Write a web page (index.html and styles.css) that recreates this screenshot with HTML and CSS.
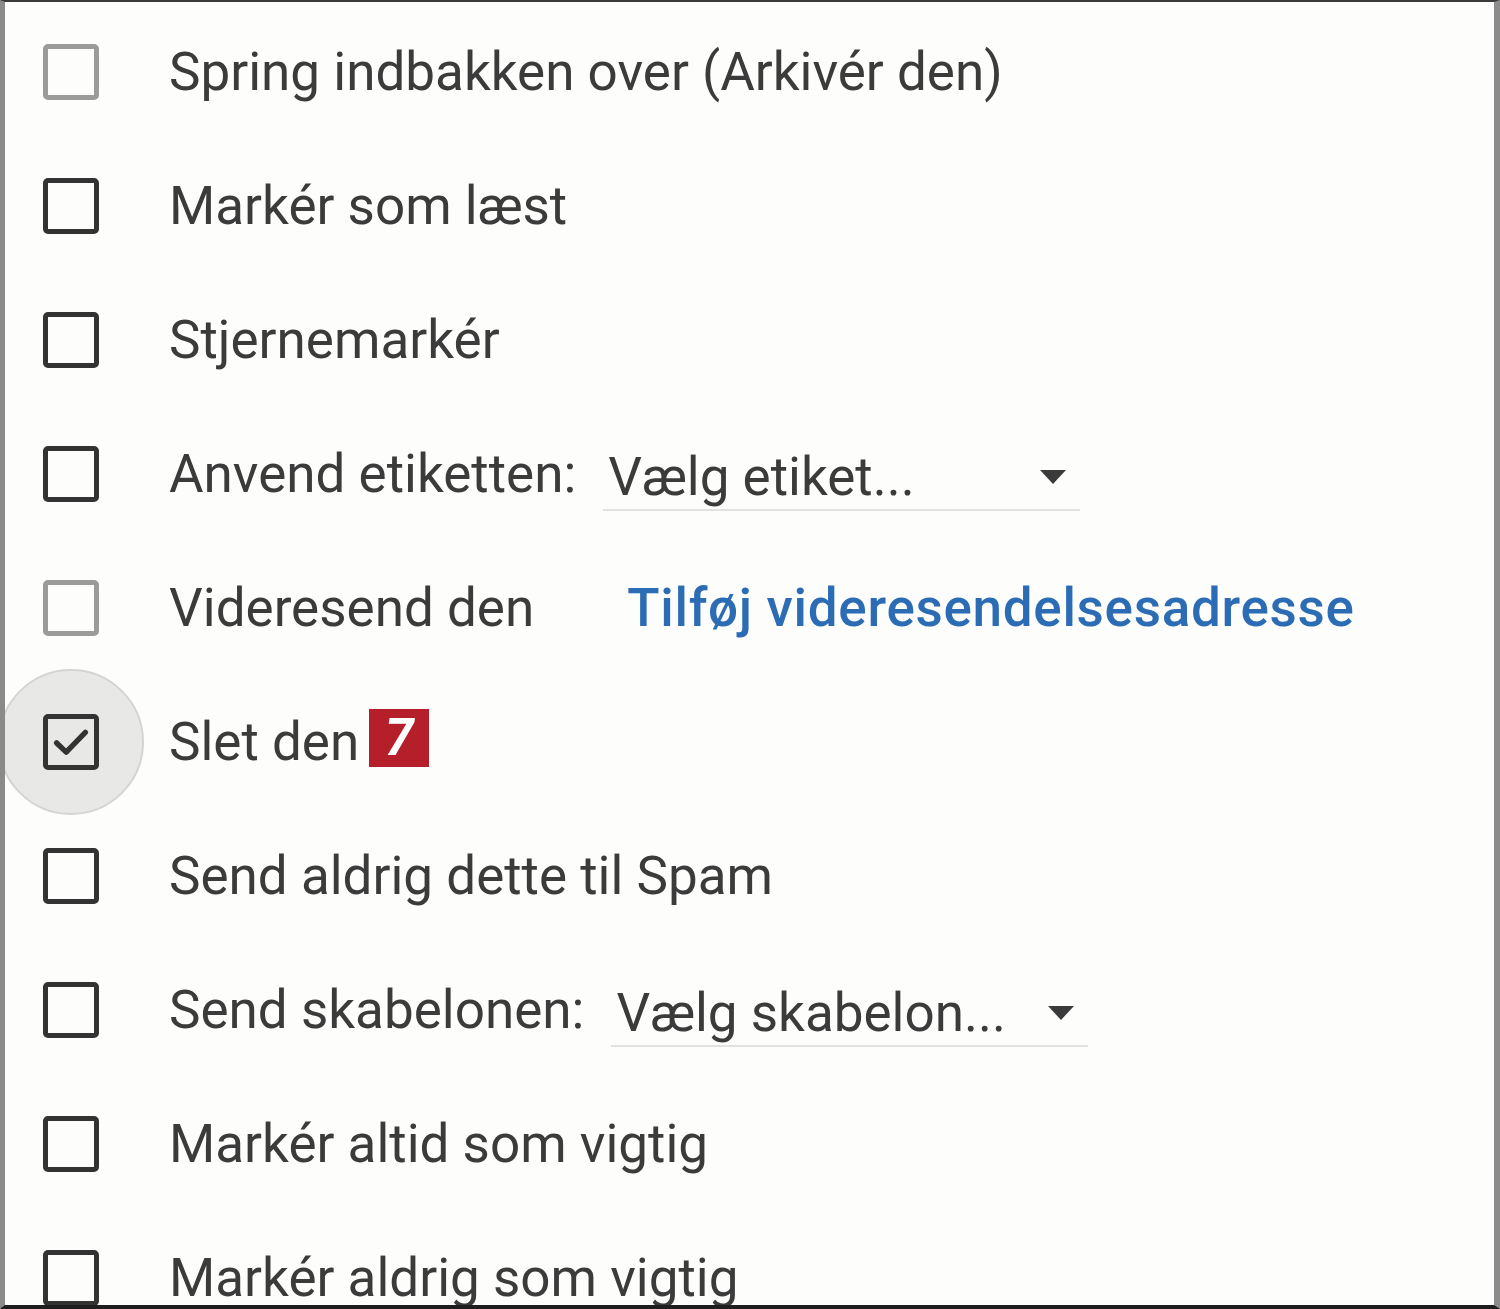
FILE: index.html
```html
<!DOCTYPE html>
<html lang="da">
<head>
    <meta charset="UTF-8">
    <title>Filterhandlinger</title>
    <link rel="stylesheet" href="styles.css">
</head>
<body>
    <div class="frame">
        <div class="row">
            <span class="box light"></span>
            <span class="label">Spring indbakken over (Arkivér den)</span>
        </div>
        <div class="row">
            <span class="box"></span>
            <span class="label">Markér som læst</span>
        </div>
        <div class="row">
            <span class="box"></span>
            <span class="label">Stjernemarkér</span>
        </div>
        <div class="row">
            <span class="box"></span>
            <span class="label">Anvend etiketten:</span>
            <span class="select">
                <span>Vælg etiket...</span>
                <span class="arrow"></span>
            </span>
        </div>
        <div class="row">
            <span class="box light"></span>
            <span class="label">Videresend den</span>
            <a class="link" href="#">Tilføj videresendelsesadresse</a>
        </div>
        <div class="row">
            <span class="box-wrap">
                <span class="ripple"></span>
                <span class="box checked">
                    <svg viewBox="0 0 24 24" width="46" height="46"><path d="M4.5 12.5l5 4.8L19.5 7" fill="none" stroke="#333" stroke-width="2.8" stroke-linecap="round" stroke-linejoin="round"/></svg>
                </span>
            </span>
            <span class="label">Slet den</span>
            <span class="badge">7</span>
        </div>
        <div class="row">
            <span class="box"></span>
            <span class="label">Send aldrig dette til Spam</span>
        </div>
        <div class="row">
            <span class="box"></span>
            <span class="label">Send skabelonen:</span>
            <span class="select">
                <span>Vælg skabelon...</span>
                <span class="arrow"></span>
            </span>
        </div>
        <div class="row">
            <span class="box"></span>
            <span class="label">Markér altid som vigtig</span>
        </div>
        <div class="row">
            <span class="box"></span>
            <span class="label">Markér aldrig som vigtig</span>
        </div>
    </div>
</body>
</html>
```

FILE: styles.css
```css
body {
    margin: 0;
    background: #fdfdfc;
    font-family: Roboto, "Liberation Sans", sans-serif;
    overflow: hidden;
}

.frame {
    box-sizing: border-box;
    height: 1309px;
    border-left: 5px solid #8a8a8a;
    border-top: 2px solid #3a3a3a;
    border-right: 6px solid #8c8c8c;
    border-bottom: 4px solid #1e1e1e;
    padding-top: 3px;
    overflow: hidden;
}

.row {
    height: 134px;
    display: flex;
    align-items: center;
    padding-left: 38px;
    color: #3b3b3b;
    font-size: 53px;
}

.box {
    box-sizing: border-box;
    width: 56px;
    height: 56px;
    border: 5px solid #333;
    border-radius: 5px;
    flex-shrink: 0;
    display: flex;
    align-items: center;
    justify-content: center;
}

.box.light {
    border-color: #9b9b9b;
}

.box-wrap {
    position: relative;
    display: flex;
}

/* focus halo behind the checked box */
.ripple {
    position: absolute;
    left: -45px;
    top: -45px;
    width: 146px;
    height: 146px;
    box-sizing: border-box;
    border-radius: 50%;
    background: #e8e9e7;
    border: 2px solid #d4d5d3;
}

.box.checked {
    position: relative;
}

.label {
    margin-left: 70px;
    white-space: nowrap;
}

.select {
    margin-left: 27px;
    width: 477px;
    height: 66px;
    border-bottom: 2px solid #e2e2e2;
    display: flex;
    align-items: center;
    justify-content: space-between;
    box-sizing: border-box;
    padding: 0 14px 0 5px;
    margin-top: 8px;
}

.arrow {
    width: 0;
    height: 0;
    border-left: 13px solid transparent;
    border-right: 13px solid transparent;
    border-top: 14px solid #3b3b3b;
}

.link {
    margin-left: 93px;
    color: #2b6cb4;
    text-decoration: none;
    font-weight: 500;
    letter-spacing: 0.7px;
}

.badge {
    margin-left: 10px;
    background: #b51f2a;
    color: #fff;
    font-weight: bold;
    font-style: italic;
    font-size: 52px;
    width: 60px;
    height: 58px;
    display: flex;
    align-items: center;
    justify-content: center;
    line-height: 1;
    margin-top: -8px;
}
```
